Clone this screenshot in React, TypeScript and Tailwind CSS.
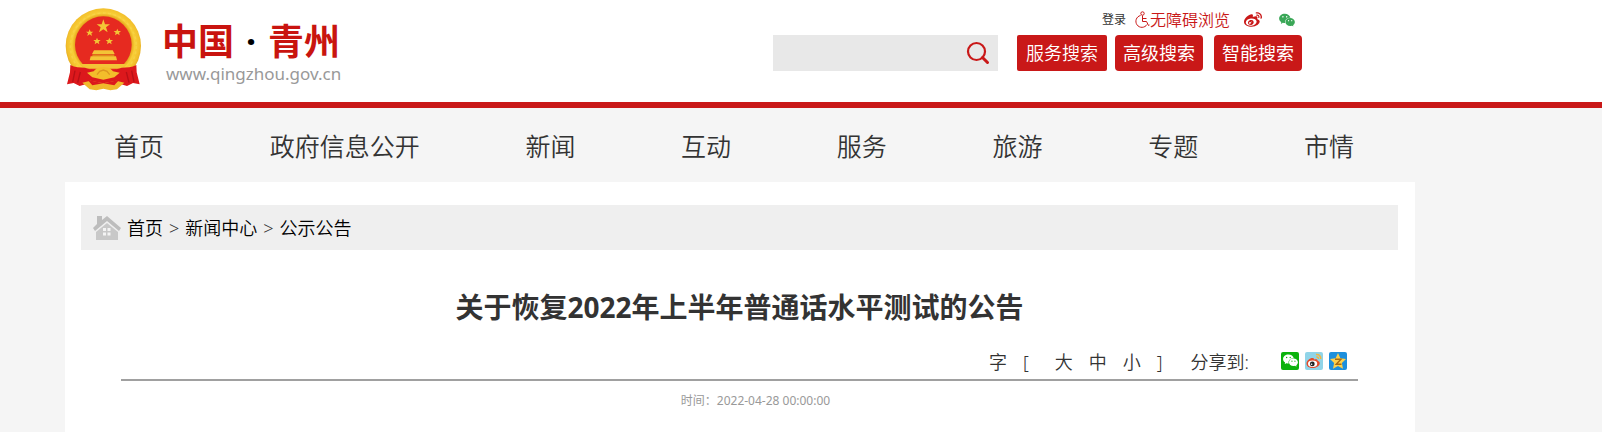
import { FaWeibo } from 'react-icons/fa';
import { AiFillWechat } from 'react-icons/ai';

const navItems = [
	'首页',
	'政府信息公开',
	'新闻',
	'互动',
	'服务',
	'旅游',
	'专题',
	'市情'
];

const crumbs = ['首页', '新闻中心', '公示公告'];

const Emblem = () => (
	<svg viewBox="16 12 228 252" className="h-[84px] w-[76px]" aria-hidden="true">
		<defs>
			<radialGradient id="gold" cx="0.5" cy="0.48" r="0.52">
				<stop offset="0.72" stopColor="#e5a41c" />
				<stop offset="0.8" stopColor="#f8cf38" />
				<stop offset="0.92" stopColor="#f3c02c" />
				<stop offset="1" stopColor="#e2a821" />
			</radialGradient>
		</defs>
		<circle cx="131" cy="126" r="113" fill="url(#gold)" />
		<circle
			cx="131"
			cy="126"
			r="99"
			fill="none"
			stroke="#fbdc5c"
			strokeWidth="5"
			strokeDasharray="9 7"
			opacity="0.4"
		/>
		<circle cx="131" cy="122" r="85" fill="#e62a20" />
		<g fill="#f3c436">
			<path d="M131 46l5 15h15l-12 9 5 15-13-9-13 9 5-15-12-9h15z" />
			<path d="M90 76l3 7h8l-6 5 2 8-7-5-7 5 2-8-6-5h8z" />
			<path d="M173 74l3 7h8l-6 5 2 8-7-5-7 5 2-8-6-5h8z" />
			<path d="M112 101l3 7h8l-6 5 2 8-7-5-7 5 2-8-6-5h8z" />
			<path d="M149 101l3 7h8l-6 5 2 8-7-5-7 5 2-8-6-5h8z" />
			<path d="M103 139h56l6 11H97z" />
			<path d="M98 151h66v7H98z" fill="#e08a1c" />
			<path d="M93 157h76l3 12H90z" />
			<path d="M62 180h138l-14 14H76z" />
		</g>
		<path
			d="M32 183c14 8 28 8 44 8l30 9h50l30-9c16 0 30 0 44-8l1 22 9 36-20-4-18 9-20-6-51 5-51-5-20 6-18-9-20 4 9-36z"
			fill="#dc181c"
		/>
		<path
			d="M46 200l-7 34M62 204l-8 32M216 200l7 34M200 204l8 32"
			stroke="#b81016"
			strokeWidth="4"
		/>
		<path
			d="M82 206l20-4 10-10 19-3 19 3 10 10 20 4-16 14-33 7-33-7z"
			fill="#f3bd2b"
		/>
		<path
			d="M112 212l8-10 11-4 11 4 8 10"
			fill="none"
			stroke="#dd9620"
			strokeWidth="4"
		/>
		<path
			d="M68 236l24-6 39 8 39-8 24 6-22 20-20 3-21-5-21 5-20-3z"
			fill="#f0b92b"
		/>
		<path d="M84 228l47 10 47-10-14 16-33-6-33 6z" fill="#dc181c" />
	</svg>
);

const WheelchairIcon = () => (
	<svg
		viewBox="0 0 16 17"
		className="h-[17px] w-4"
		fill="none"
		stroke="currentColor"
		strokeWidth="1"
		aria-hidden="true"
	>
		<circle cx="8.5" cy="2.5" r="1.7" />
		<path d="M8.5 4.5v6h4l2 4 1-.5M8.5 7.500h4M6.500 4.500a6 6 0 1 0 6.500 9" />
	</svg>
);

const HomeIcon = () => (
	<svg viewBox="0 0 28 24" className="h-6 w-7" aria-hidden="true">
		<path
			d="M4 0h5v4l5-4 14 12-2 3L14 5 2 15l-2-3 4-4z"
			fill="#bdbdbd"
		/>
		<path d="M14 7l11 9v8H3v-8z" fill="#c8c8c8" />
		<path
			d="M10 12h3v3h-3zM14.500 12h3v3h-3zM10 16.500h3v3h-3zM14.500 16.500h3v3h-3z"
			fill="#f4f4f4"
		/>
	</svg>
);

const SearchIcon = () => (
	<svg
		viewBox="0 0 24 24"
		className="size-6"
		fill="none"
		stroke="#c91818"
		strokeWidth="2.200"
		strokeLinecap="round"
		aria-hidden="true"
	>
		<circle cx="10.500" cy="10.500" r="8.500" />
		<path d="M16.500 16.500l5 5" strokeWidth="3" />
	</svg>
);

const WeiboShareIcon = () => (
	<svg viewBox="0 0 18 18" className="size-[18px]" aria-hidden="true">
		<rect width="18" height="18" rx="2" fill="#90d4e8" />
		<path
			d="M11 2.500c3-.5 5 1.500 4.700 4.500M11.300 5c1.500-.2 2.200.6 2.100 2"
			fill="none"
			stroke="#f0b642"
			strokeWidth="1.500"
		/>
		<path
			d="M1.500 11.500c0-3 4-6 6.500-5.500 1 .2 1 1 1 1.500 2-.7 4-.4 3.700 1.500 1.500.3 2.300 1.300 2 2.700-.6 2.600-3.700 4.300-7 4.300s-6.200-1.500-6.200-4.500z"
			fill="#e34b2c"
		/>
		<ellipse cx="7.600" cy="11.700" rx="4.600" ry="3.300" fill="#fff" />
		<circle cx="7.300" cy="11.900" r="2.400" fill="#222" />
		<circle cx="6.600" cy="12.300" r="0.800" fill="#fff" />
	</svg>
);

const QzoneShareIcon = () => (
	<svg viewBox="0 0 18 18" className="size-[18px]" aria-hidden="true">
		<rect width="18" height="18" rx="2" fill="#1d8fdc" />
		<path
			d="M9 1l2.400 5.300 5.600.7-4.100 3.900 1.100 5.800L9 13.900l-5 2.800 1.100-5.800L1 7l5.600-.7z"
			fill="#fcd04b"
		/>
		<path
			d="M6 7.200h6l-4.800 5h5.300"
			fill="none"
			stroke="#a86a10"
			strokeWidth="1.400"
		/>
	</svg>
);

const Header = () => (
	<header className="border-b-6 border-[#c91818] bg-white pl-[65px]">
		<div className="flex h-[102px] max-w-[1350px] justify-between pr-[113px]">
			<a href="#" className="flex items-start gap-[21px] pt-2">
				<Emblem />
				<span className="flex flex-col pt-[14px]">
					<span className="flex text-[36px] leading-10 font-bold text-[#c9140f]">
						中国
						<span className="w-[34px] text-center text-black">·</span>
						青州
					</span>
					<span className="pl-1 text-[17px] leading-6 text-[#999]">
						www.qingzhou.gov.cn
					</span>
				</span>
			</a>
			<div className="flex flex-col items-end">
				<div className="flex h-[35px] items-center pt-1 pr-[6px]">
					<a href="#" className="mr-2 text-xs text-[#333]">
						登录
					</a>
					<a
						href="#"
						className="flex items-center text-base font-[350] text-[#c91818]"
					>
						<WheelchairIcon />
						无障碍浏览
					</a>
					<a href="#" aria-label="微博" className="ml-[14px] text-[#c91818]">
						<FaWeibo size={18} />
					</a>
					<a href="#" aria-label="微信" className="ml-4 text-[#3aa757]">
						<AiFillWechat size={18} />
					</a>
				</div>
				<form className="flex" onSubmit={e => e.preventDefault()}>
					<div className="mr-[19px] flex h-9 w-[225px] items-center bg-[#e8e8e8] pr-2">
						<input
							type="text"
							aria-label="搜索"
							className="h-full min-w-0 flex-1 bg-transparent px-2 outline-none"
						/>
						<button type="submit" aria-label="搜索">
							<SearchIcon />
						</button>
					</div>
					<button
						type="button"
						className="h-9 w-[90px] rounded-xs bg-[#c91818] text-lg font-[350] text-white"
					>
						服务搜索
					</button>
					<button
						type="button"
						className="ml-2 h-9 w-[88px] rounded bg-[#c91818] text-lg text-white"
					>
						高级搜索
					</button>
					<button
						type="button"
						className="ml-[11px] h-9 w-[88px] rounded bg-[#c91818] text-lg text-white"
					>
						智能搜索
					</button>
				</form>
			</div>
		</div>
	</header>
);

export default function App() {
	return (
		<div className="flex min-h-screen flex-col bg-[#f5f5f5] font-['Noto_Sans','Noto_Sans_CJK_SC',sans-serif] text-[#333]">
			<Header />
			<nav className="pl-[65px]">
				<div className="flex h-[74px] max-w-[1350px] items-center justify-between pt-1 pr-[61px] pl-[49px] text-[25px] font-[350]">
					{navItems.map(item => (
						<a key={item} href="#">
							{item}
						</a>
					))}
				</div>
			</nav>
			<div className="flex flex-1 pl-[65px]">
				<main className="w-full max-w-[1350px] bg-white pt-[23px] pr-[17px] pl-4">
					<div className="flex h-[45px] items-center bg-[#efefef] pl-3 text-lg font-[350] text-black">
						<HomeIcon />
						<div className="ml-[6px] flex gap-[6px]">
							{crumbs.map((crumb, i) => (
								<span key={crumb} className="flex gap-[6px]">
									{i > 0 && <span className="text-[#333]">&gt;</span>}
									<a href="#">{crumb}</a>
								</span>
							))}
						</div>
					</div>
					<h1 className="mt-[37px] text-center text-[28px] leading-10 font-bold">
						关于恢复2022年上半年普通话水平测试的公告
					</h1>
					<div className="mx-10 mt-[18px] flex h-9 items-center justify-end border-b-2 border-[#a0a0a0] pr-[11px] text-lg font-[350]">
						<span>字</span>
						<span className="ml-4">[</span>
						<div className="mx-4 flex gap-4 pl-[10px]">
							<button type="button">大</button>
							<button type="button">中</button>
							<button type="button">小</button>
						</div>
						<span>]</span>
						<span className="ml-7">分享到:</span>
						<div className="mb-[3px] ml-8 flex gap-[6px]">
							<a
								href="#"
								aria-label="分享到微信"
								className="flex size-[18px] items-center justify-center rounded-xs bg-[#0bb20c] text-white"
							>
								<AiFillWechat size={17} />
							</a>
							<a href="#" aria-label="分享到微博">
								<WeiboShareIcon />
							</a>
							<a href="#" aria-label="分享到QQ空间">
								<QzoneShareIcon />
							</a>
						</div>
					</div>
					<p className="mt-3 pb-6 pl-8 text-center text-xs text-[#999]">
						时间：2022-04-28 00:00:00
					</p>
				</main>
			</div>
		</div>
	);
}
